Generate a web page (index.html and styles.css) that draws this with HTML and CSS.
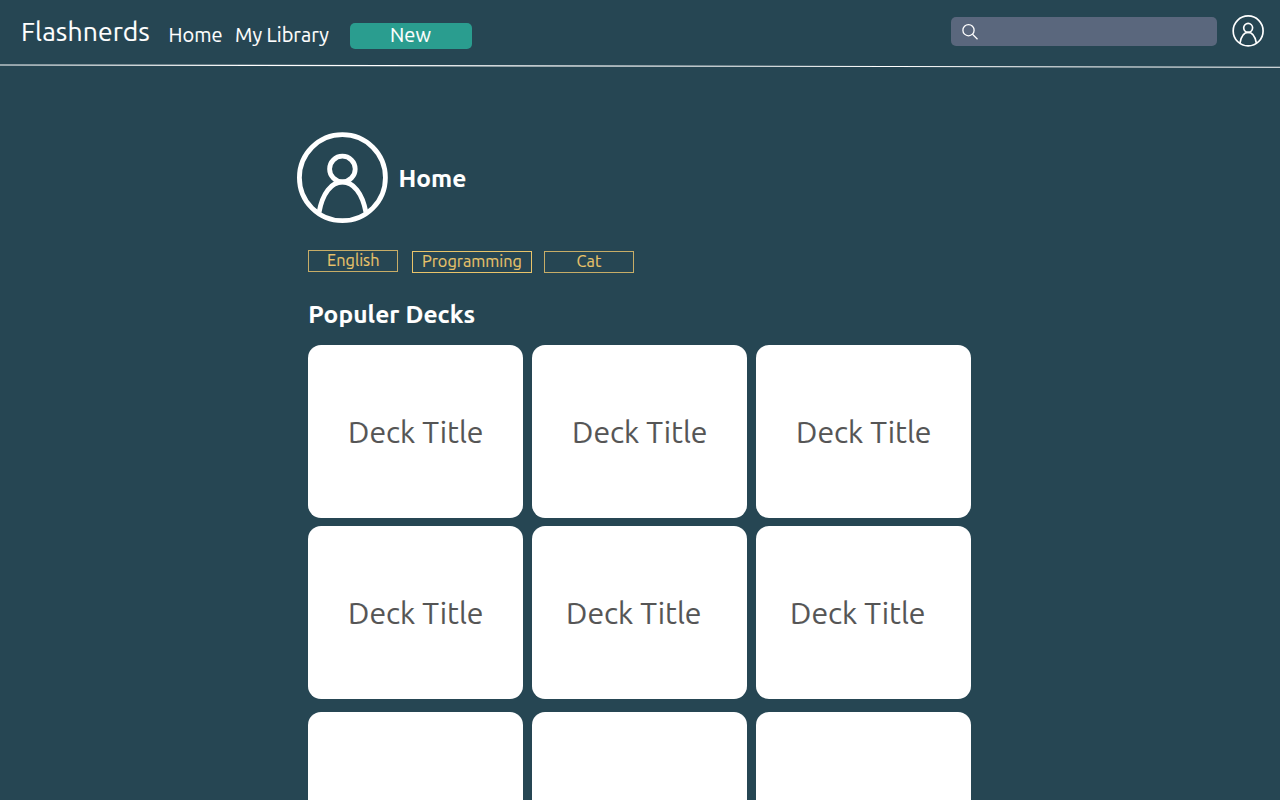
FILE: index.html
```html
<!DOCTYPE html>
<html lang="en">
<head>
<meta charset="utf-8">
<title>Flashnerds</title>
<link rel="stylesheet" href="styles.css">
</head>
<body>
<svg class="defs" aria-hidden="true">
  <symbol id="avatar" viewBox="0 0 92 92">
    <g fill="none" stroke="currentColor" stroke-width="4.8">
      <circle cx="46.400" cy="45.700" r="43"/>
      <circle cx="46.400" cy="37" r="12.800"/>
      <path d="M23 80.500C26.500 61 35.500 50 46.400 50S66.400 61 70 80.500"/>
    </g>
  </symbol>
</svg>
<header class="topbar">
  <a class="brand">Flashnerds</a>
  <nav class="nav">
    <a class="link-home">Home</a>
    <a class="link-library">My Library</a>
  </nav>
  <button class="new"><span>New</span></button>
  <div class="search">
    <svg viewBox="0 0 18 18"><g fill="none" stroke="#fff" stroke-width="1.3"><circle cx="7.500" cy="7.200" r="5.600"/><path d="M11.500 11.200L16.500 16.200"/></g></svg>
  </div>
  <svg class="avatar-small"><use href="#avatar"/></svg>
</header>
<svg class="rule" viewBox="0 0 1280 5" preserveAspectRatio="none"><path d="M0 0.900L1280 3.300" stroke="#fff" stroke-width="1.050"/></svg>
<main class="page">
  <div class="profile">
    <svg class="avatar-large"><use href="#avatar"/></svg>
    <h1>Home</h1>
  </div>
  <div class="tags">
    <span class="tag english"><span>English</span></span>
    <span class="tag programming"><span>Programming</span></span>
    <span class="tag cat"><span>Cat</span></span>
  </div>
  <h2>Populer Decks</h2>
  <div class="decks">
    <article class="deck"><span>Deck Title</span></article>
    <article class="deck"><span>Deck Title</span></article>
    <article class="deck"><span>Deck Title</span></article>
    <article class="deck"><span>Deck Title</span></article>
    <article class="deck shifted"><span>Deck Title</span></article>
    <article class="deck shifted"><span>Deck Title</span></article>
    <article class="deck"></article>
    <article class="deck"></article>
    <article class="deck"></article>
  </div>
</main>
</body>
</html>
```

FILE: styles.css
```css
* { box-sizing: border-box; }
body {
  margin: 0;
  height: 800px;
  overflow: hidden;
  background: #264653;
  color: #fff;
  font-family: Ubuntu, "Noto Sans", sans-serif;
  -webkit-text-stroke: 0.12px currentColor;
}
.defs { display: none; }
.topbar {
  display: flex;
  align-items: flex-start;
  height: 64px;
  padding: 0 16px 0 21px;
  white-space: nowrap;
}
.brand {
  width: 147.5px;
  padding-top: 13px;
  font-size: 26.5px;
  line-height: 36px;
  letter-spacing: 0.1px;
}
.nav {
  display: flex;
  width: 181px;
  padding-top: 21px;
  font-size: 20px;
  line-height: 28px;
}
.link-home { width: 66.5px; }
.new {
  display: flex;
  justify-content: center;
  width: 122px;
  height: 26px;
  margin-top: 23px;
  padding: 0;
  border: 0;
  border-radius: 5px;
  background: #2a9d8f;
  color: inherit;
  font: 20px/24px Ubuntu, "Noto Sans", sans-serif;
}
.search {
  width: 266px;
  height: 29px;
  margin: 16.5px 15px 0 auto;
  padding: 6.5px 10px;
  border-radius: 5px;
  background: #5a677d;
}
.search svg { display: block; width: 18px; height: 18px; }
.avatar-small { width: 32px; height: 32px; margin-top: 15px; }
.rule { display: block; width: 1280px; height: 5px; }
.page { width: 664px; margin-left: 308.3px; padding-top: 63px; }
.profile { display: flex; height: 92px; margin-left: -12.3px; }
.avatar-large { width: 92px; height: 92px; }
h1, h2 {
  margin: 0;
  font-size: 24.5px;
  line-height: 34px;
  font-weight: 700;
  letter-spacing: 0.1px;
  white-space: nowrap;
}
h1 { margin: 29px 0 0 10.5px; letter-spacing: 0; }
.tags {
  display: flex;
  height: 24px;
  margin-top: 26px;
  font-size: 16.3px;
  line-height: 19px;
  color: #e9c46a;
}
.tag { display: flex; justify-content: center; width: 90px; height: 22px; border: 1px solid #c7ad67; }
.programming { width: 120px; margin: 1px 12px 0 13.7px; border-color: #e9c46a; }
.cat { margin-top: 1px; }
h2 { margin-top: 23px; }
.decks {
  display: grid;
  grid-template-columns: repeat(3, 215px);
  grid-template-rows: 173px 181px 101px;
  column-gap: 9px;
  margin-top: 14px;
}
.deck {
  display: flex;
  align-items: center;
  justify-content: center;
  height: 173px;
  border-radius: 13px;
  background: #fff;
  color: #555;
  font-size: 30.2px;
}
.deck:nth-child(n+4) { margin-top: 8px; }
.deck:nth-child(n+7) { height: 88px; margin-top: 13px; border-radius: 13px 13px 0 0; }
.shifted { padding-right: 12px; }
```
